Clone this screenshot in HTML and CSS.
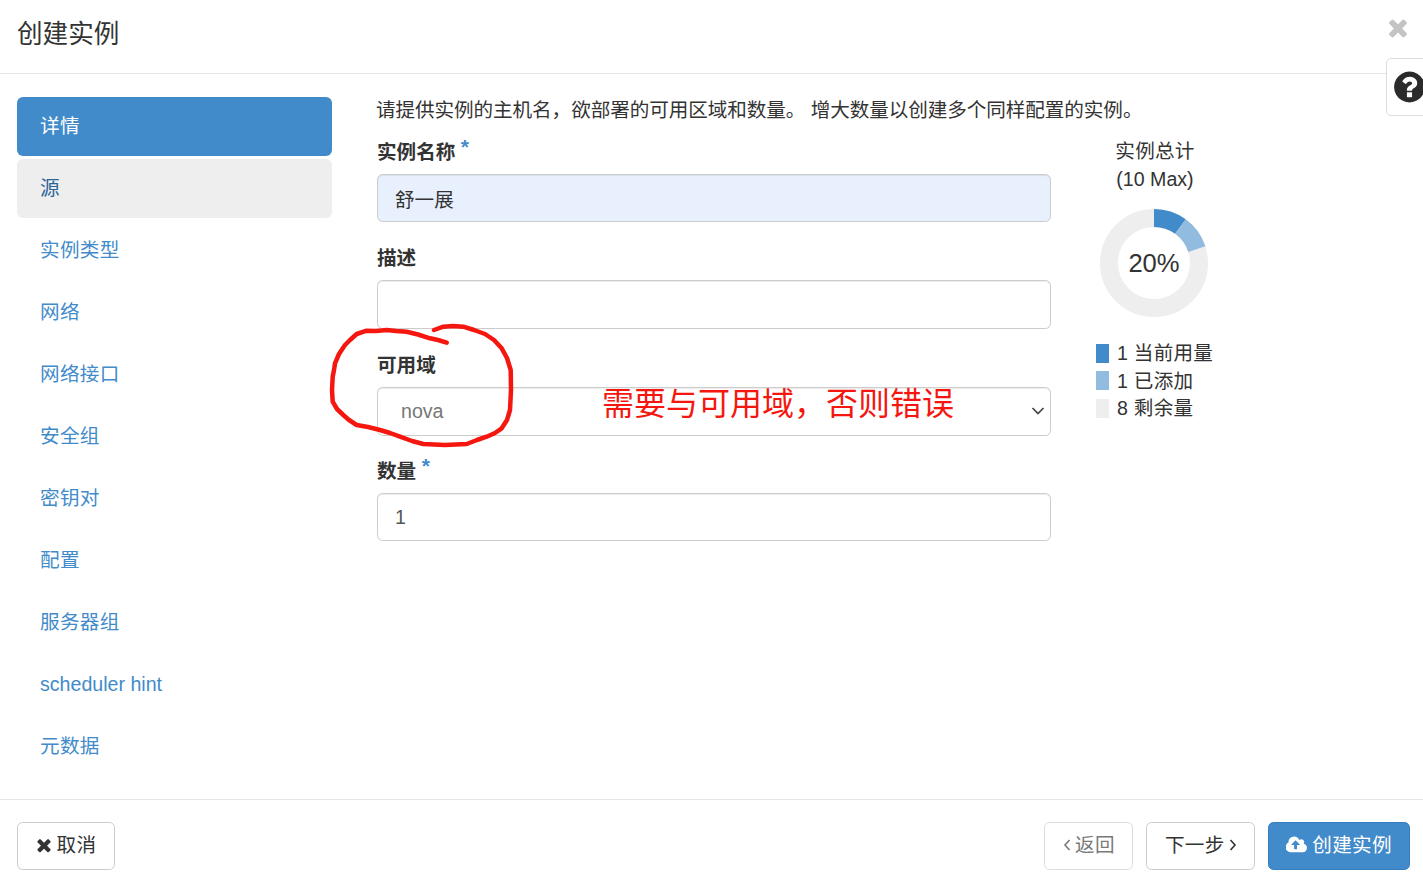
FILE: index.html
```html
<!DOCTYPE html>
<html lang="zh-CN">
<head>
<meta charset="utf-8">
<title>创建实例</title>
<link rel="stylesheet" href="styles.css">
</head>
<body>
<div class="modal">
  <header class="head">
    <h1 class="title">创建实例</h1>
    <svg class="close" viewBox="0 0 1408 1792"><path d="M1298 1322q0 40-28 68l-136 136q-28 28-68 28t-68-28l-294-294-294 294q-28 28-68 28t-68-28l-136-136q-28-28-28-68t28-68l294-294-294-294q-28-28-28-68t28-68l136-136q28-28 68-28t68 28l294 294 294-294q28-28 68-28t68 28l136 136q28 28 28 68t-28 68l-294 294 294 294q28 28 28 68z"/></svg>
  </header>
  <div class="help">
    <svg class="help-icon" viewBox="0 0 1536 1792"><path d="M896 1376v-192q0-14-9-23t-23-9h-192q-14 0-23 9t-9 23v192q0 14 9 23t23 9h192q14 0 23-9t9-23zm256-672q0-88-55.500-163t-138.500-116-170-41q-243 0-371 213-15 24 8 42l132 100q7 6 19 6 16 0 25-12 53-68 86-92 34-24 86-24 48 0 85.500 26t37.500 59q0 38-20 61t-68 45q-63 28-115.500 86.500t-52.500 125.500v36q0 14 9 23t23 9h192q14 0 23-9t9-23q0-19 21.500-49.500t54.500-49.500q32-18 49-28.500t46-35 44.500-48 28-60.500 12.500-81zm384 192q0 209-103 385.500t-279.500 279.500-385.500 103-385.500-103-279.500-279.500-103-385.500 103-385.500 279.500-279.500 385.500-103 385.500 103 279.500 279.500 103 385.500z"/></svg>
  </div>
  <div class="content">
    <nav class="nav">
      <a class="nav-item active">详情</a>
      <a class="nav-item hover">源</a>
      <a class="nav-item">实例类型</a>
      <a class="nav-item">网络</a>
      <a class="nav-item">网络接口</a>
      <a class="nav-item">安全组</a>
      <a class="nav-item">密钥对</a>
      <a class="nav-item">配置</a>
      <a class="nav-item">服务器组</a>
      <a class="nav-item latin">scheduler hint</a>
      <a class="nav-item">元数据</a>
    </nav>
    <main class="main">
      <p class="intro">请提供实例的主机名，欲部署的可用区域和数量。 增大数量以创建多个同样配置的实例。</p>
      <div class="columns">
        <form class="form">
          <div class="field">
            <label class="label">实例名称 <span class="req">*</span></label>
            <input class="control filled" type="text" value="舒一展">
          </div>
          <div class="field">
            <label class="label">描述</label>
            <input class="control" type="text">
          </div>
          <div class="field">
            <label class="label">可用域</label>
            <div class="select-wrap">
              <select class="control select"><option>nova</option></select>
              <svg class="select-arrow" viewBox="0 0 14 8"><path d="M1.500 1 7 6.500 12.500 1"/></svg>
            </div>
          </div>
          <div class="field">
            <label class="label">数量 <span class="req">*</span></label>
            <input class="control num" type="text" value="1">
          </div>
        </form>
        <aside class="side">
          <div class="side-title">实例总计<br><span class="side-max">(10 Max)</span></div>
          <div class="donut">
            <svg class="donut-svg" viewBox="0 0 108 108">
              <circle class="ring ring-rest" cx="54" cy="54" r="45"/>
              <circle class="ring ring-cur" cx="54" cy="54" r="45" pathLength="100" stroke-dasharray="10 90"/>
              <circle class="ring ring-add" cx="54" cy="54" r="45" pathLength="100" stroke-dasharray="10 90" stroke-dashoffset="-10"/>
            </svg>
            <span class="donut-text">20%</span>
          </div>
          <ul class="legend">
            <li class="legend-row"><i class="swatch s-cur"></i>1 当前用量</li>
            <li class="legend-row"><i class="swatch s-add"></i>1 已添加</li>
            <li class="legend-row"><i class="swatch s-rest"></i>8 剩余量</li>
          </ul>
        </aside>
      </div>
    </main>
  </div>
  <footer class="foot">
    <button class="btn" type="button">
      <svg class="ico-x" viewBox="0 0 1408 1792"><path d="M1298 1322q0 40-28 68l-136 136q-28 28-68 28t-68-28l-294-294-294 294q-28 28-68 28t-68-28l-136-136q-28-28-28-68t28-68l294-294-294-294q-28-28-28-68t28-68l136-136q28-28 68-28t68 28l294 294 294-294q28-28 68-28t68 28l136 136q28 28 28 68t-28 68l-294 294 294 294q28 28 28 68z"/></svg><span>取消</span>
    </button>
    <div class="foot-right">
      <button class="btn disabled" type="button">
        <svg class="ico-ang" viewBox="0 0 8 14"><path d="M6.500 2 2 7l4.500 5"/></svg><span>返回</span>
      </button>
      <button class="btn" type="button"><span>下一步</span>
        <svg class="ico-ang" viewBox="0 0 8 14"><path d="M1.500 2 6 7l-4.500 5"/></svg>
      </button>
      <button class="btn primary" type="button">
        <svg class="ico-cloud" viewBox="0 0 1920 1792"><path d="M1216 864q0-14-9-23l-352-352q-9-9-23-9t-23 9l-351 351q-10 12-10 24 0 14 9 23t23 9h224v352q0 13 9.500 22.500t22.500 9.500h192q13 0 22.500-9.500t9.500-22.500v-352h224q13 0 22.500-9.500t9.500-22.500zm640 288q0 159-112.500 271.500t-271.500 112.500h-1088q-185 0-316.500-131.500t-131.500-316.500q0-130 70-240t188-165q-2-30-2-43 0-212 150-362t362-150q156 0 285.500 87t188.500 231q71-62 166-62 106 0 181 75t75 181q0 76-41 138 130 31 213.500 135.500t83.500 238.500z"/></svg><span>创建实例</span>
      </button>
    </div>
  </footer>
  <svg class="scribble" viewBox="0 0 1423 880"><path d="M446.700 342.700 438 340 430 338.300 418 334.500 406.700 331.700 396 331 386.700 330 376 331 366.700 330.700 356.700 334 350 340 345 345 339 354 335 363.300 334 370 332.700 376.700 332 390 332.700 401.700 337 409 343.300 415 349 420 356.700 425 368 427 380 430 390 433 400 436.700 412 441 423.300 444 445 445 466.700 444 477 440 486.700 436.700 495 433 501.700 428.300 507 420 510 410 511 390 510.700 370 507 358 501.700 348.300 494 340 485 334 474 330 463.300 326.700 453 326 443.300 326.700 434 330"/></svg>
  <div class="note">需要与可用域，否则错误</div>
</div>
</body>
</html>
```
FILE: styles.css
```css
* { box-sizing: border-box; }
html, body { margin: 0; height: 100%; overflow: hidden; background: #fff; }
body {
  font-family: "Liberation Sans", "Noto Sans CJK SC", sans-serif;
  font-size: 19.6px;
  line-height: 28px;
  color: #333;
}
.modal { position: relative; width: 1423px; height: 880px; display: flex; flex-direction: column; overflow: hidden; }
.head { flex: none; height: 74px; border-bottom: 1px solid #e5e5e5; padding: 0 14px 0 17px; display: flex; justify-content: space-between; align-items: flex-start; }
.title { margin: 15px 0 0; font-size: 25.6px; line-height: 38px; font-weight: 400; }
.close { width: 22px; height: 27px; margin-top: 14px; fill: #c4c4c4; }
.help { position: absolute; left: 1386px; top: 58px; width: 60px; height: 58px; background: #fff; border: 1px solid #ddd; border-radius: 5px 0 0 5px; padding: 10px 0 0 7px; }
.help-icon { display: block; width: 31px; height: 36px; fill: #2b2b2b; }
.content { flex: none; height: 725px; display: flex; padding: 23px 0 0 17px; }
.nav { flex: none; width: 315px; display: flex; flex-direction: column; gap: 3px; }
.nav-item { height: 59px; padding: 15px 23px; border-radius: 6px; color: #428bca; letter-spacing: .3px; }
.nav-item.latin { letter-spacing: 0; }
.nav-item.active { background: #428bca; color: #fff; }
.nav-item.hover { background: #eee; color: #2a6496; }
.main { flex: none; width: 1046px; margin-left: 45px; }
.intro { margin: -1px 0 0 -1px; height: 28px; letter-spacing: -0.08px; white-space: nowrap; }
.columns { display: flex; margin-top: 13px; }
.form { flex: none; width: 674px; }
.field { height: 106.400px; display: flex; flex-direction: column; }
.label { font-weight: 700; height: 37px; line-height: 30px; flex: none; }
.req { color: #428bca; font-size: 21px; position: relative; top: -5px; }
.control { display: block; width: 674px; height: 48.300px; flex: none; border: 1px solid #ccc; border-radius: 5.600px; padding: 0 17px; font: inherit; color: #333; background: #fff; outline: none; box-shadow: inset 0 1px 1px rgba(0,0,0,.075); }
.filled { background: #e8f0fe; }
.select-wrap { position: relative; width: 674px; }
.select { height: 49px; color: #777; padding-left: 23px; appearance: none; -webkit-appearance: none; }
.select-arrow { position: absolute; right: 6px; top: 20px; width: 14px; height: 8px; fill: none; stroke: #444; stroke-width: 1.700; }
.num { color: #555; }
.side { flex: none; margin-left: 45px; width: 118px; letter-spacing: .25px; }
.side-title { text-align: center; }
.side-max { letter-spacing: 0; }
.donut { position: relative; width: 108px; height: 108px; margin: 16px 0 0 4px; }
.donut-svg { display: block; width: 108px; height: 108px; transform: rotate(-90deg); }
.ring { fill: none; stroke-width: 18; }
.ring-rest { stroke: #eee; }
.ring-cur { stroke: #428bca; }
.ring-add { stroke: #92bbe0; }
.donut-text { position: absolute; inset: 0; display: flex; align-items: center; justify-content: center; font-size: 25.600px; letter-spacing: 0; }
.legend { list-style: none; margin: 22.300px 0 0; padding: 0; white-space: nowrap; }
.legend-row { height: 27.500px; display: flex; align-items: center; white-space: pre; }
.swatch { flex: none; width: 13px; height: 19px; margin-right: 8px; }
.s-cur { background: #428bca; }
.s-add { background: #92bbe0; }
.s-rest { background: #eee; }
.foot { flex: none; height: 81px; border-top: 1px solid #e5e5e5; padding: 22px 13px 0 17px; display: flex; justify-content: space-between; align-items: flex-start; }
.foot-right { display: flex; gap: 13px; }
.btn { height: 48px; padding: 0 17.500px 2px; border: 1px solid #ccc; border-radius: 5.600px; background: #fff; color: #333; font: inherit; letter-spacing: .35px; display: inline-flex; align-items: center; gap: 4px; }
.btn.disabled { opacity: .65; }
.btn.primary { background: #428bca; border-color: #357ebd; color: #fff; padding: 0 17px 2px; }
.ico-x { width: 16px; height: 20px; fill: #333; margin-right: 1px; }
.ico-ang { width: 8px; height: 14px; fill: none; stroke: currentColor; stroke-width: 1.600; }
.ico-cloud { width: 22px; height: 20px; fill: #fff; }
.scribble { position: absolute; left: 0; top: 0; width: 1423px; height: 880px; pointer-events: none; fill: none; stroke: #f5170f; stroke-width: 4.500; stroke-linejoin: round; stroke-linecap: round; }
.note { position: absolute; left: 602px; top: 383px; font-size: 32px; line-height: 42px; color: #f5170f; white-space: nowrap; }
```
